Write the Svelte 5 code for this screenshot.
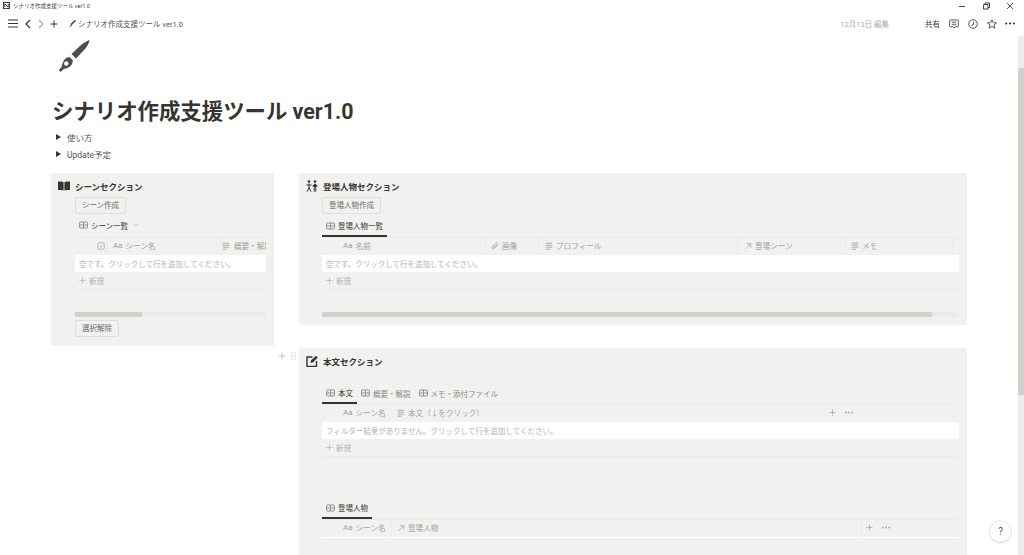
<script>
  const sceneCols = [
    { w: 33, icon: 'check', label: '', pad: 22 },
    { w: 109, icon: 'aa', label: 'シーン名', pad: 5 },
    { w: 60, icon: 'lines', label: '概要・解説', pad: 5, wide: true }
  ];
  const charCols = [
    { w: 164, icon: 'aa', label: '名前', pad: 21 },
    { w: 53, icon: 'clip', label: '画像', pad: 5 },
    { w: 199, icon: 'lines', label: 'プロフィール' },
    { w: 108, icon: 'arrow', label: '登場シーン' },
    { w: 107, icon: 'lines', label: 'メモ', pad: 5 }
  ];
  const bodyCols = [
    { w: 70, icon: 'aa', label: 'シーン名', pad: 21, plain: true },
    { w: 433, icon: 'lines', label: '本文（↓をクリック）', pad: 5, plain: true }
  ];
  const castCols = [
    { w: 70, icon: 'aa', label: 'シーン名', pad: 21 },
    { w: 470, icon: 'arrow', label: '登場人物', pad: 5 }
  ];
</script>

{#snippet gridIcon()}
  <svg class="ti" viewBox="0 0 12 10"><rect x=".8" y="1" width="10.400" height="8" rx="1.200" fill="none" stroke="currentColor" stroke-width="1.300"/><path d="M1 5h10M6 1v8" stroke="currentColor" stroke-width="1.200"/></svg>
{/snippet}

{#snippet colIcon(kind)}
  {#if kind === 'aa'}
    <span class="aa">Aa</span>
  {:else if kind === 'lines'}
    <svg class="ci" viewBox="0 0 10 10"><path d="M1 1.500h8M1 4h8M1 6.500h8M1 9h5" stroke="currentColor" stroke-width="1.100"/></svg>
  {:else if kind === 'clip'}
    <svg class="ci" viewBox="0 0 10 10"><path d="M8.500 4.200 4.600 8.200c-1 1-2.200 1-3 .2s-.7-2 .2-3l4-4c.6-.6 1.500-.6 2 0s.5 1.300 0 1.900L4.200 6.900c-.3.3-.7.3-1 0s-.2-.7 0-1l2.700-2.700" fill="none" stroke="currentColor" stroke-width=".9"/></svg>
  {:else if kind === 'arrow'}
    <svg class="ci" viewBox="0 0 10 10"><path d="M2 8.500 8 2.500M3.500 2H8.500V7" fill="none" stroke="currentColor" stroke-width="1"/></svg>
  {:else if kind === 'check'}
    <svg class="ci" viewBox="0 0 10 10"><rect x="1" y="1" width="8" height="8" rx="1" fill="none" stroke="currentColor" stroke-width=".9"/><path d="M3 5l1.500 1.600L7 3.400" fill="none" stroke="currentColor" stroke-width=".9"/></svg>
  {/if}
{/snippet}

{#snippet header(cols, tail)}
  <div class="thead">
    {#each cols as c}
      <div class="th" class:plain={c.plain} class:wide-gap={c.wide} style="width:{c.w}px;padding-left:{c.pad ?? 6}px">
        {@render colIcon(c.icon)}
        {#if c.label}<span class="thl">{c.label}</span>{/if}
      </div>
    {/each}
    {#if tail}
      <div class="tail">
        <svg class="tp" viewBox="0 0 9 9"><path d="M4.500 .5v8M.5 4.500h8" stroke="currentColor" stroke-width="1"/></svg>
        <svg class="tm" viewBox="0 0 9 3"><circle cx="1" cy="1.500" r="1" fill="currentColor"/><circle cx="4.500" cy="1.500" r="1" fill="currentColor"/><circle cx="8" cy="1.500" r="1" fill="currentColor"/></svg>
      </div>
    {/if}
  </div>
{/snippet}

{#snippet newRow()}
  <div class="new">
    <svg class="np" viewBox="0 0 9 9"><path d="M4.500 .5v8M.5 4.500h8" stroke="currentColor" stroke-width=".9"/></svg>
    <span>新規</span>
  </div>
{/snippet}

<div class="app">
  <div class="titlebar">
    <svg class="tb-logo" viewBox="0 0 8 8"><rect x=".5" y=".5" width="7" height="7" fill="#fff" stroke="#333" stroke-width="1"/><path d="M2 2v4M2 2l4 4M6 2v4" stroke="#333" stroke-width="1"/></svg>
    <span class="tb-text">シナリオ作成支援ツール ver1.0</span>
    <div class="winctl">
      <svg viewBox="0 0 10 10"><path d="M2 5.500h6" stroke="#444" stroke-width="1"/></svg>
      <svg viewBox="0 0 10 10"><path d="M2.500 3.500h4.500v4.500h-4.500zM4 3.500V2h4.500v4.500H7" fill="none" stroke="#444" stroke-width="1"/></svg>
      <svg viewBox="0 0 10 10"><path d="M2 2l6 6M8 2l-6 6" stroke="#444" stroke-width=".9"/></svg>
    </div>
  </div>

  <div class="topbar">
    <svg class="nav burger" viewBox="0 0 10 9"><path d="M0 1h10M0 4.500h10M0 8h10" stroke="#37352f" stroke-width="1"/></svg>
    <svg class="nav chev" viewBox="0 0 6 10"><path d="M5 1 1 5l4 4" fill="none" stroke="#37352f" stroke-width="1.200"/></svg>
    <svg class="nav chev off" viewBox="0 0 6 10"><path d="M1 1l4 4-4 4" fill="none" stroke="#a8a7a3" stroke-width="1.100"/></svg>
    <svg class="nav plus" viewBox="0 0 9 9"><path d="M4.500 .5v8M.5 4.500h8" stroke="#37352f" stroke-width="1.100"/></svg>
    <svg class="nav pen" viewBox="0 0 8 8"><path d="M7.500 .5 3 4.500" stroke="#4a4a48" stroke-width="1.600"/><path d="M3.500 3.800 1 7.500l3.500-2.600z" fill="#4a4a48"/></svg>
    <span class="crumb">シナリオ作成支援ツール ver1.0</span>
    <span class="spacer"></span>
    <span class="edited">12月13日 編集</span>
    <span class="share">共有</span>
    <svg class="act" viewBox="0 0 11 11"><path d="M1.700 1h7.600a1 1 0 0 1 1 1v5.500a1 1 0 0 1-1 1H7L5.500 10 4 8.500H1.700a1 1 0 0 1-1-1V2a1 1 0 0 1 1-1zM3 3.500h5M3 5.800h5" fill="none" stroke="#37352f" stroke-width=".9"/></svg>
    <svg class="act" viewBox="0 0 11 11"><circle cx="5.500" cy="5.500" r="4.700" fill="none" stroke="#37352f" stroke-width=".9"/><path d="M6 2.800V6L3.500 7.200" fill="none" stroke="#37352f" stroke-width=".9"/></svg>
    <svg class="act last" viewBox="0 0 11 11"><path d="M5.500 .8 6.900 4l3.500.3-2.700 2.300.9 3.500-3.100-1.900-3.100 1.900.9-3.500L.6 4.300 4.100 4z" fill="none" stroke="#37352f" stroke-width=".9"/></svg>
    <svg class="more" viewBox="0 0 10 3"><circle cx="1.200" cy="1.500" r="1.100" fill="#37352f"/><circle cx="5" cy="1.500" r="1.100" fill="#37352f"/><circle cx="8.800" cy="1.500" r="1.100" fill="#37352f"/></svg>
  </div>

  <div class="viewport">
    <main class="page">
      <svg class="page-icon" viewBox="0 0 34 34">
        <path d="M32.500 0 C32 3 30.500 6 28 9 L19 18.500 L14.500 14 L24 5 C26.500 3 29.500 1 32.500 0z" fill="#4e4e4c"/>
        <path d="M9 18 12.500 17 16 20.500 15 24C13.500 27 10 28.500 6.800 29L3.700 32 1.800 30.200 4.500 27C5 24 6.500 20 9 18z" fill="#4e4e4c"/>
        <circle cx="9.300" cy="23.500" r="2.200" fill="#fff"/>
      </svg>

      <h1>シナリオ作成支援ツール ver1.0</h1>

      <div class="toggle"><span class="tri"></span><span>使い方</span></div>
      <div class="toggle"><span class="tri"></span><span>Update予定</span></div>

      <div class="columns">
        <section class="panel left">
          <div class="head">
            <svg class="hicon" viewBox="0 0 12 10"><path d="M0 .8 C2 .3 4 .4 5.600 1.200V9.600C4 8.900 2 8.800 0 9.300zM6.400 1.200C8 .4 10 .3 12 .8V9.300C10 8.800 8 8.900 6.400 9.600z" fill="#37352f"/></svg>
            <span>シーンセクション</span>
          </div>
          <div class="inner-l">
            <div class="btn">シーン作成</div>
            <div class="tabs noline">
              <div class="tab dropdown">{@render gridIcon()}<span class="dark">シーン一覧</span>
                <svg class="dd" viewBox="0 0 6 4"><path d="M.5.5 3 3 5.500.5" fill="none" stroke="#a9a8a4" stroke-width=".8"/></svg>
              </div>
            </div>
            <div class="clip">{@render header(sceneCols)}</div>
            <div class="empty">空です。クリックして行を追加してください。</div>
            {@render newRow()}
            <div class="hscroll"><div class="thumb thumb-l"></div></div>
            <div class="btn after">選択解除</div>
          </div>
        </section>

        <div class="rightcol">
          <section class="panel char">
            <div class="head">
              <svg class="hicon" viewBox="0 0 12 12">
                <g fill="#37352f"><circle cx="3" cy="1.500" r="1.300"/><circle cx="9" cy="1.500" r="1.300"/><path d="M9 3.300 11.600 6 9 8.200 6.400 6z"/></g>
                <path d="M3 3.300v4.200M.4 5h5.200M3 7.500 1 11.700M3 7.500l2 4.200M8.200 8v3.700M9.800 8v3.700" fill="none" stroke="#37352f" stroke-width="1"/>
              </svg>
              <span>登場人物セクション</span>
            </div>
            <div class="inner-r">
              <div class="btn">登場人物作成</div>
              <div class="tabs noline">
                <div class="tab active wide">{@render gridIcon()}<span class="dark">登場人物一覧</span></div>
              </div>
              {@render header(charCols)}
              <div class="empty">空です。クリックして行を追加してください。</div>
              {@render newRow()}
              <div class="hscroll"><div class="thumb thumb-r"></div></div>
            </div>
          </section>

          <div class="blockwrap">
            <div class="gutter">
              <svg class="gp" viewBox="0 0 9 9"><path d="M4.500 .5v8M.5 4.500h8" stroke="#c0bfbb" stroke-width="1"/></svg>
              <svg class="gd" viewBox="0 0 5 8"><g fill="#c9c8c4"><circle cx="1" cy="1" r=".7"/><circle cx="4" cy="1" r=".7"/><circle cx="1" cy="4" r=".7"/><circle cx="4" cy="4" r=".7"/><circle cx="1" cy="7" r=".7"/><circle cx="4" cy="7" r=".7"/></g></svg>
            </div>
            <section class="panel bodyp">
              <div class="head">
                <svg class="hicon" viewBox="0 0 12 12"><path d="M6.500 2H1v9.500h9.500V6" fill="none" stroke="#37352f" stroke-width="1.400"/><path d="M4.500 8 5 5.500 10 .7l1.800 1.800L7 7.500z" fill="#37352f"/></svg>
                <span>本文セクション</span>
              </div>
              <div class="inner-r">
                <div class="tabs first">
                  <div class="tab active t1">{@render gridIcon()}<span class="dark">本文</span></div>
                  <div class="tab">{@render gridIcon()}<span>概要・解説</span></div>
                  <div class="tab">{@render gridIcon()}<span>メモ・添付ファイル</span></div>
                </div>
                {@render header(bodyCols, true)}
                <div class="empty">フィルター結果がありません。クリックして行を追加してください。</div>
                {@render newRow()}

                <div class="tabs second">
                  <div class="tab active t2">{@render gridIcon()}<span class="dark">登場人物</span></div>
                </div>
                <div class="lastt">{@render header(castCols, true)}</div>
              </div>
            </section>
          </div>
        </div>
      </div>
    </main>

    <div class="vscroll"><div class="vthumb"></div></div>
    <div class="help">?</div>
  </div>
</div>

<style>
  :global(body) { margin: 0; background: #fff; }
  .app {
    width: 1024px; height: 555px; overflow: hidden; display: flex; flex-direction: column;
    font-family: "Roboto", "Noto Sans CJK JP", sans-serif; color: #37352f; position: relative;
  }
  .titlebar { height: 11px; display: flex; align-items: center; padding-left: 3px; font-size: 5.500px; color: #333; flex: none; }
  .tb-logo { width: 7px; height: 7px; margin-right: 3px; }
  .tb-text { flex: 1; color: #444; }
  .winctl { display: flex; gap: 14px; padding-right: 9px; }
  .winctl svg { width: 10px; height: 10px; }

  .topbar { height: 25px; display: flex; align-items: center; padding-left: 8px; flex: none; }
  .nav { display: block; flex: none; }
  .burger { width: 10px; height: 9px; margin-right: 7px; }
  .chev { width: 6px; height: 10px; margin-right: 7px; }
  .chev.off { margin-right: 6px; }
  .plus { width: 8px; height: 8px; margin-right: 10px; }
  .pen { width: 8px; height: 8px; margin-right: 2px; }
  .crumb { font-size: 7.500px; color: #55534e; }
  .spacer { flex: 1; }
  .edited { font-size: 7.500px; color: #aeadaa; margin-right: 36px; }
  .share { font-size: 7.500px; color: #37352f; margin-right: 9px; }
  .act { width: 10px; height: 10px; margin-right: 9px; flex: none; }
  .act.last { margin-right: 8px; }
  .more { width: 10px; height: 3px; margin-right: 9px; flex: none; }

  .viewport { flex: 1; min-height: 0; position: relative; display: flex; }
  .page { flex: 1; min-width: 0; padding: 4px 0 0 51px; box-sizing: border-box; overflow: hidden; }
  .page-icon { display: block; width: 34px; height: 34px; margin-left: 6px; }
  h1 { margin: 24px 0 0 1px; font-size: 21.400px; line-height: 28px; font-weight: 700; color: #37352f; white-space: nowrap; }
  .toggle { display: flex; align-items: center; height: 17px; box-sizing: border-box; padding: 0 0 2px 5px; font-size: 8.500px; color: #55534e; }
  .toggle:first-of-type { margin-top: 3px; }
  .tri { width: 0; height: 0; border-left: 5px solid #37352f; border-top: 3px solid transparent; border-bottom: 3px solid transparent; margin-right: 6px; }

  .columns { display: flex; align-items: flex-start; gap: 25px; margin-top: 10px; width: 916px; }
  .panel { background: #f1f1ef; border-radius: 2px; box-sizing: border-box; }
  .left { width: 223px; height: 173px; }
  .rightcol { width: 668px; display: flex; flex-direction: column; gap: 23px; }
  .char { height: 152px; }
  .bodyp { height: 300px; }
  .blockwrap { position: relative; }
  .gutter { position: absolute; left: -21px; top: 4px; display: flex; align-items: center; gap: 5px; }
  .gp { width: 8px; height: 8px; }
  .gd { width: 5px; height: 8px; }

  .head { display: flex; align-items: center; height: 16px; padding: 5px 0 1px 7px; font-size: 8.500px; font-weight: 700; color: #37352f; }
  .hicon { width: 12px; height: 12px; margin-right: 5px; flex: none; }
  .inner-l { padding: 2px 8px 0 24px; }
  .inner-r { padding: 2px 8px 0 23px; }

  .btn { display: flex; align-items: center; width: fit-content; height: 17px; box-sizing: border-box; padding: 0 6px 2px; background: #f1f1ef; border: 1px solid #e0dfdc; border-radius: 2px; font-size: 7.500px; color: #6d6c68; }
  .btn.after { margin-top: 3px; }

  .tabs { display: flex; height: 18px; margin-top: 5px; font-size: 7.500px; color: #8c8b87; }
  .tabs.first { margin-top: 14px; }
  .tabs.second { margin-top: 44px; }
  .tab { display: flex; align-items: center; gap: 3px; height: 17px; padding: 0 4px 3px; box-sizing: border-box; }
  .tab.active { border-bottom: 2px solid #37352f; height: 18px; }
  .tab.dropdown { height: 18px; padding-bottom: 6px; }
  .wide { width: 65px; }
  .t1 { width: 35px; }
  .t2 { width: 50px; }
  .dark { color: #37352f; }
  .ti { width: 9px; height: 8px; flex: none; }
  .dd { width: 5px; height: 4px; margin-left: 2px; }

  .clip { overflow: hidden; }
  .thead { display: flex; height: 18px; border-top: 1px solid #ebebe8; box-sizing: border-box; font-size: 7.600px; color: #a3a29e; }
  .th { display: flex; align-items: center; gap: 3px; box-sizing: border-box; border-right: 1px solid #ebebe8; padding-bottom: 2px; white-space: nowrap; flex: none; overflow: hidden; }
  .th.plain { border-right: 0; }
  .th.wide-gap { gap: 4px; border-right: 0; }
  .aa { font-size: 8px; }
  .ci { width: 8px; height: 8px; flex: none; }
  .tail { display: flex; align-items: center; gap: 9px; padding: 0 0 2px 4px; color: #a9a8a4; }
  .tp { width: 7px; height: 7px; }
  .tm { width: 8px; height: 3px; }

  .empty { height: 17px; background: #fff; display: flex; align-items: center; padding-left: 4px; font-size: 7.500px; color: #b4b3af; white-space: nowrap; overflow: hidden; }
  .new { height: 18px; display: flex; align-items: center; gap: 3px; padding-left: 4px; font-size: 7.500px; color: #b4b3af; border-bottom: 1px solid #ebebe8; box-sizing: border-box; }
  .np { width: 7px; height: 7px; }

  .hscroll { height: 5px; margin-top: 22px; background: #ebeae7; }
  .thumb { height: 100%; background: #d3d1cb; }
  .thumb-l { width: 67px; }
  .thumb-r { width: 610px; }
  .lastt :global(.thead) { border-bottom: 1px solid #fff; height: 19px; }

  .vscroll { width: 6px; flex: none; background: #ededeb; padding-top: 32px; }
  .vthumb { height: 327px; background: #d3d1cb; }
  .help { position: absolute; left: 990px; top: 485px; width: 21px; height: 21px; border-radius: 50%; background: #fff; box-shadow: 0 0 0 1px rgba(15,15,15,.06), 0 1px 3px rgba(15,15,15,.12); display: flex; align-items: center; justify-content: center; font-size: 10px; color: #55534e; }
</style>
